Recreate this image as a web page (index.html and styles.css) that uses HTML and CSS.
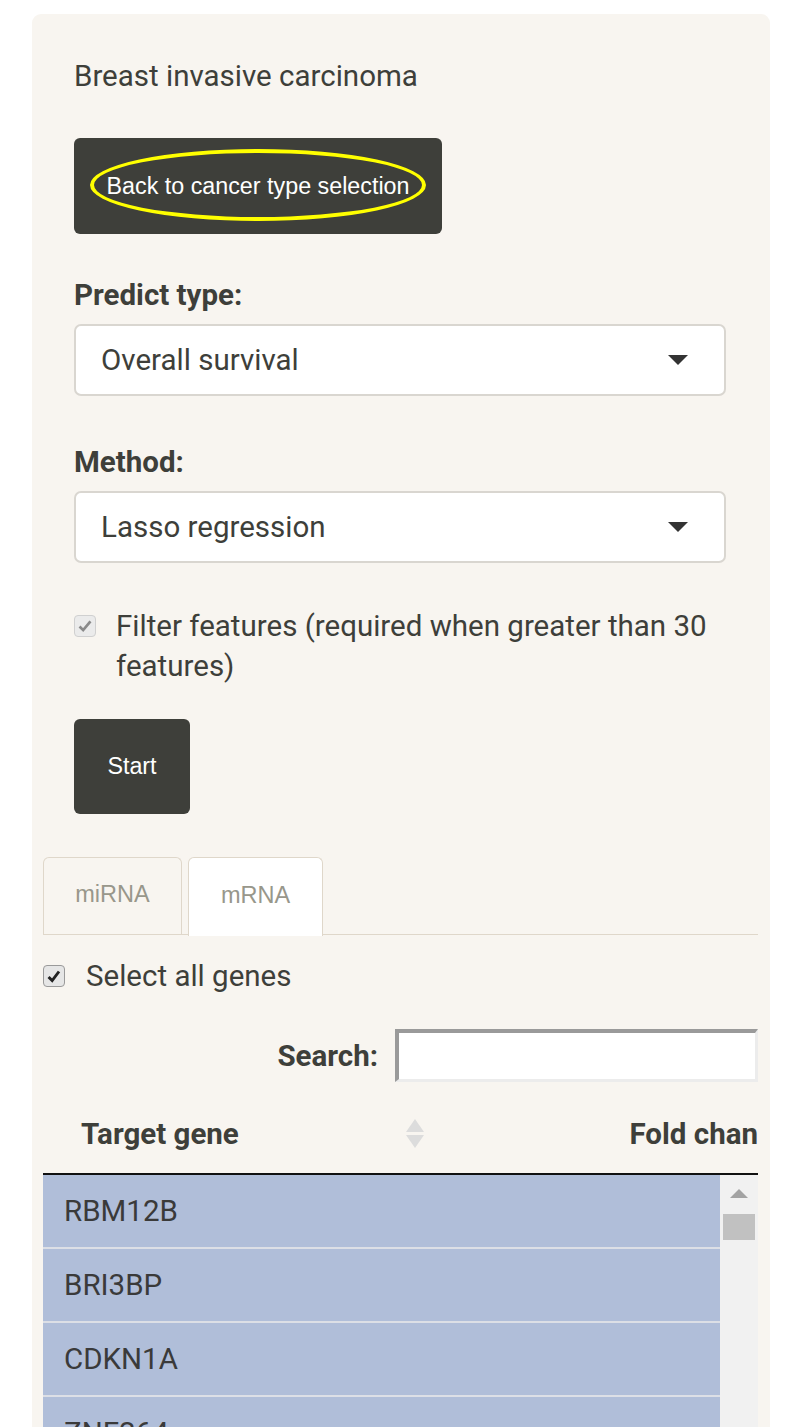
FILE: index.html
```html
<!DOCTYPE html>
<html>
<head>
<meta charset="utf-8">
<link rel="stylesheet" href="styles.css">
</head>
<body>
<div class="well">
  <div class="form">
    <p class="title">Breast invasive carcinoma</p>
    <div class="btn-row">
      <button class="btn btn-back">Back to cancer type selection<span class="annot"></span></button>
    </div>
    <div class="group">
      <div class="label">Predict type:</div>
      <div class="select"><span>Overall survival</span><span class="caret"></span></div>
    </div>
    <div class="group">
      <div class="label">Method:</div>
      <div class="select"><span>Lasso regression</span><span class="caret"></span></div>
    </div>
    <div class="check-row">
      <span class="cb cb-disabled"><svg viewBox="0 0 22 22" width="22" height="22"><path d="M5 11.5 L9 15.5 L17 6" fill="none" stroke="#8a8a8a" stroke-width="3"/></svg></span>
      <span class="check-text">Filter features (required when greater than 30 features)</span>
    </div>
    <div class="btn-row">
      <button class="btn btn-start">Start</button>
    </div>
  </div>
  <div class="tabs">
    <div class="tab">miRNA</div>
    <div class="tab tab-active">mRNA</div>
  </div>
  <div class="select-all">
    <span class="cb cb-on"><svg viewBox="0 0 22 22" width="21" height="21"><path d="M5 11.5 L9 15.5 L16.5 5.5" fill="none" stroke="#222" stroke-width="3.2"/></svg></span>
    <span class="sa-text">Select all genes</span>
  </div>
  <div class="search-row">
    <span class="search-label">Search:</span>
    <div class="search-input"></div>
  </div>
  <div class="thead">
    <div class="th th-gene">Target gene<span class="sort"><span class="up"></span><span class="down"></span></span></div>
    <div class="th th-fold">Fold chan</div>
  </div>
  <div class="tbody">
    <div class="rows">
      <div class="row">RBM12B</div>
      <div class="row">BRI3BP</div>
      <div class="row">CDKN1A</div>
      <div class="row">ZNF264</div>
    </div>
    <div class="scrollbar">
      <span class="sb-arrow"></span>
      <span class="sb-thumb"></span>
    </div>
  </div>
</div>
</body>
</html>
```
FILE: styles.css
```css
html, body {
  margin: 0;
  padding: 0;
  background: #ffffff;
  overflow: hidden;
}
body {
  height: 1427px;
  font-family: Roboto, "Liberation Sans", sans-serif;
  color: #3e3f3a;
}
.well {
  margin: 14px 0 0 32px;
  width: 738px;
  height: 1500px;
  background: #f8f5f0;
  border-radius: 9px;
  box-sizing: border-box;
  padding: 0 12px 0 11px;
}
.form {
  padding: 42px 32px 0 31px;
}
.title {
  margin: 0;
  font-size: 29.5px;
  line-height: 40px;
  height: 40px;
}
.btn-row {
  display: flex;
}
.btn {
  position: relative;
  background: #3e3f3a;
  color: #ffffff;
  border: 0;
  border-radius: 6px;
  font-family: "Liberation Sans", Arial, sans-serif;
  font-size: 23.3px;
  padding: 0;
  margin: 0;
}
.btn-back {
  margin-top: 42px;
  width: 368px;
  height: 96px;
}
.annot {
  position: absolute;
  left: 16px;
  top: 11px;
  width: 328px;
  height: 64px;
  border: 4px solid #ffff00;
  border-radius: 50%;
}
.group {
  margin-top: 46px;
}
.group + .group {
  margin-top: 51px;
}
.label {
  font-weight: bold;
  font-size: 29.5px;
  line-height: 30px;
  height: 30px;
}
.select {
  margin-top: 14px;
  height: 72px;
  box-sizing: border-box;
  background: #ffffff;
  border: 2px solid #d9d6d0;
  border-radius: 7px;
  display: flex;
  align-items: center;
  justify-content: space-between;
  padding: 0 36px 0 25px;
  font-size: 29.5px;
}
.caret {
  width: 0;
  height: 0;
  border-left: 10px solid transparent;
  border-right: 10px solid transparent;
  border-top: 10px solid #333333;
}
.check-row {
  margin-top: 43px;
  display: flex;
  align-items: flex-start;
  gap: 20px;
}
.cb {
  flex: none;
  box-sizing: border-box;
  border-radius: 4px;
  display: flex;
  align-items: center;
  justify-content: center;
}
.cb-disabled {
  width: 22px;
  height: 22px;
  margin-top: 9px;
  background: #ebebeb;
  border: 1px solid #d0d0d0;
}
.check-text {
  font-size: 29.5px;
  line-height: 40px;
}
.btn-start {
  margin-top: 33px;
  width: 116px;
  height: 95px;
}
.tabs {
  margin-top: 43px;
  display: flex;
  gap: 6px;
  border-bottom: 1px solid #dfd7ca;
  height: 78px;
  box-sizing: border-box;
}
.tab {
  width: 139px;
  height: 78px;
  box-sizing: border-box;
  border: 1px solid #dfd7ca;
  border-bottom: 0;
  border-radius: 6px 6px 0 0;
  display: flex;
  align-items: center;
  justify-content: center;
  padding-bottom: 4px;
  font-family: "Liberation Sans", Arial, sans-serif;
  font-size: 23.5px;
  color: #98978b;
}
.tab-active {
  width: 135px;
  background: #ffffff;
  height: 79px;
}
.select-all {
  margin-top: 28px;
  display: flex;
  align-items: center;
  gap: 21px;
  height: 26px;
}
.cb-on {
  width: 22px;
  height: 22px;
  background: #e6e6e6;
  border: 1px solid #9a9a9a;
}
.sa-text {
  font-size: 29.5px;
}
.search-row {
  margin-top: 40px;
  display: flex;
  justify-content: flex-end;
  align-items: center;
  gap: 17px;
  height: 53px;
}
.search-label {
  font-weight: bold;
  font-size: 29.5px;
}
.search-input {
  width: 363px;
  height: 53px;
  box-sizing: border-box;
  background: #ffffff;
  border-style: solid;
  border-width: 4px 3px 3px 4px;
  border-color: #9a9a9a #ececec #ececec #9a9a9a;
}
.thead {
  margin-top: 20px;
  height: 73px;
  box-sizing: border-box;
  border-bottom: 2px solid #111111;
  display: flex;
  align-items: center;
  justify-content: space-between;
  padding-bottom: 7px;
}
.th {
  font-weight: bold;
  font-size: 29.5px;
  line-height: 36px;
}
.th-gene {
  position: relative;
  padding-left: 38px;
  width: 345px;
}
.sort {
  position: absolute;
  left: 363px;
  top: 50%;
  margin-top: -15px;
  width: 18px;
  height: 30px;
}
.sort .up, .sort .down {
  position: absolute;
  left: 0;
  width: 0;
  height: 0;
  border-left: 9px solid transparent;
  border-right: 9px solid transparent;
}
.sort .up {
  top: 0;
  border-bottom: 13px solid #dcdcdc;
}
.sort .down {
  top: 16px;
  border-top: 13px solid #dcdcdc;
}
.th-fold {
  white-space: nowrap;
}
.tbody {
  display: flex;
}
.rows {
  flex: 1;
}
.row {
  height: 74px;
  box-sizing: border-box;
  background: #b0bed9;
  border-bottom: 2px solid #dcdfe6;
  display: flex;
  align-items: center;
  padding-left: 21px;
  font-size: 29.5px;
  color: #3a3a3a;
}
.scrollbar {
  width: 38px;
  background: #f1f1f1;
  display: flex;
  flex-direction: column;
  align-items: center;
  padding-top: 14px;
}
.sb-arrow {
  width: 0;
  height: 0;
  border-left: 9px solid transparent;
  border-right: 9px solid transparent;
  border-bottom: 9px solid #a3a3a3;
}
.sb-thumb {
  margin-top: 16px;
  width: 32px;
  height: 26px;
  background: #c1c1c1;
}
```
